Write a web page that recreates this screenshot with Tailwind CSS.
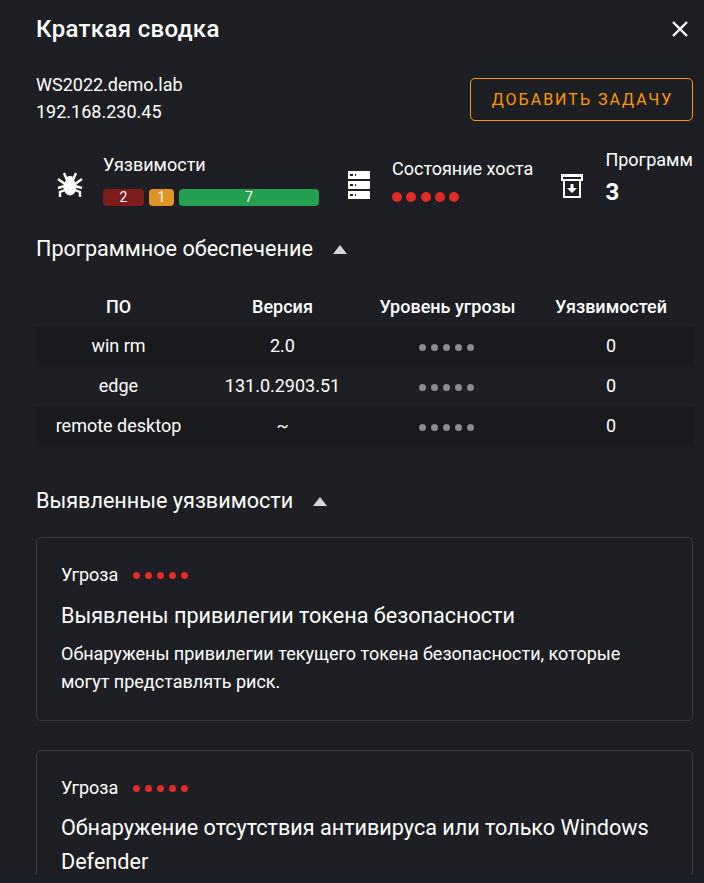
<!DOCTYPE html>
<html lang="ru">
<head>
  <meta charset="UTF-8">
  <meta name="viewport" content="width=device-width, initial-scale=1.0">
  <title>Краткая сводка</title>
  <script src="https://cdn.jsdelivr.net/npm/@tailwindcss/browser@4"></script>
</head>
<body class="h-[883px] overflow-hidden bg-[#1a2026] font-['Roboto',sans-serif] text-white">
  <div class="h-[875px] overflow-hidden bg-[#1e1f24] pl-[36px] pr-[11px]">
    <div class="flex h-[58px] items-center justify-between">
      <h1 class="text-[24px] font-medium tracking-[0.35px]">Краткая сводка</h1>
      <svg class="mr-[3px] h-5 w-5" viewBox="0 0 20 20" fill="none" stroke="white" stroke-width="2.4"><path d="M3 3l14 14M17 3L3 17"/></svg>
    </div>

    <div class="mt-[13px] flex items-start justify-between">
      <div class="text-[18px] leading-[27px]">
        <p>WS2022.demo.lab</p>
        <p>192.168.230.45</p>
      </div>
      <button class="mt-[7px] h-[43px] w-[223px] rounded-[5px] border border-[#ff9800] pl-[2px] text-[16px] font-normal tracking-[2px] text-[#ff9800]">ДОБАВИТЬ ЗАДАЧУ</button>
    </div>

    <div class="mt-[20px] flex h-[66px] items-center whitespace-nowrap">
      <div class="flex shrink-0 items-center">
        <svg class="ml-[21px] mt-[13px] h-[26px] w-[26px]" viewBox="0 0 26 26" fill="white">
          <ellipse cx="13" cy="15" rx="6.5" ry="8.5"/><circle cx="13" cy="8" r="4"/>
          <path d="M7 1l3 7M19 1l-3 7M1 7l7 5M25 7l-7 5M1 16l7-2M25 16l-7-2M3 25v-5l5-2M23 25v-5l-5-2" fill="none" stroke="white" stroke-width="2.4"/>
        </svg>
        <div class="ml-[20px] mt-[4px]">
          <p class="text-[18px] leading-5">Уязвимости</p>
          <div class="mt-[14px] flex gap-[5px] text-[14px] leading-[17px]">
            <span class="w-[41px] rounded-[4px] bg-[#7f1d1d] text-center">2</span>
            <span class="w-[25px] rounded-[4px] bg-[#e09326] text-center">1</span>
            <span class="w-[140px] rounded-[4px] bg-[#22a04f] text-center">7</span>
          </div>
        </div>
      </div>
      <div class="ml-[29px] flex shrink-0 items-center">
        <svg class="mt-[14px] h-[28px] w-[22px]" viewBox="0 0 22 28">
          <path fill="white" d="M0 0h22v8H0zM0 10h22v8H0zM0 20h22v8H0z"/>
          <path fill="#1e1f24" d="M2 3h3v2H2zM7 3h1v2H7zM2 13h3v2H2zM7 13h1v2H7zM2 23h3v2H2zM7 23h1v2H7z"/>
        </svg>
        <div class="ml-[22px] mt-[5px]">
          <p class="text-[18px] leading-5">Состояние хоста</p>
          <div class="mt-[13px] flex gap-[4.25px]">
            <span class="h-[10px] w-[10px] rounded-full bg-[#e02b27]"></span>
            <span class="h-[10px] w-[10px] rounded-full bg-[#e02b27]"></span>
            <span class="h-[10px] w-[10px] rounded-full bg-[#e02b27]"></span>
            <span class="h-[10px] w-[10px] rounded-full bg-[#e02b27]"></span>
            <span class="h-[10px] w-[10px] rounded-full bg-[#e02b27]"></span>
          </div>
        </div>
      </div>
      <div class="ml-[28px] flex shrink-0 items-center">
        <svg class="mt-[16px] h-[24px] w-[22px]" viewBox="0 0 22 24">
          <path fill="white" fill-rule="evenodd" d="M0 0h22v7h-2v17H2V7H0zM2 3v2h18V3zM4 7v15h14V7z"/>
          <path fill="white" d="M9.5 10h3v4h3.5l-5 5-5-5h3.5z"/>
        </svg>
        <div class="ml-[22px]">
          <p class="text-[18px] leading-5">Программ</p>
          <p class="mt-[8px] text-[24px] font-bold leading-7">3</p>
        </div>
      </div>
    </div>

    <div class="mt-[20px] flex h-[36px] items-center">
      <h2 class="text-[21.6px]">Программное обеспечение</h2>
      <span class="ml-[20px] h-0 w-0 border-x-[7px] border-b-[9px] border-x-transparent border-b-[#d6d6d6]"></span>
    </div>

    <div class="mt-[20px] text-center text-[18px]">
      <div class="grid h-[40px] grid-cols-[165px_163px_167px_160px] items-center pb-[2px] font-medium">
        <span>ПО</span><span>Версия</span><span>Уровень угрозы</span><span>Уязвимостей</span>
      </div>
      <div class="grid h-[40px] grid-cols-[165px_163px_167px_160px] items-center bg-[#191a1e] pb-[4px]">
        <span>win rm</span><span>2.0</span>
        <span class="mt-[4px] flex justify-center gap-[5px] pr-[2px]"><i class="h-[7px] w-[7px] rounded-full bg-[#8c8c8c]"></i><i class="h-[7px] w-[7px] rounded-full bg-[#8c8c8c]"></i><i class="h-[7px] w-[7px] rounded-full bg-[#8c8c8c]"></i><i class="h-[7px] w-[7px] rounded-full bg-[#8c8c8c]"></i><i class="h-[7px] w-[7px] rounded-full bg-[#8c8c8c]"></i></span>
        <span>0</span>
      </div>
      <div class="grid h-[40px] grid-cols-[165px_163px_167px_160px] items-center pb-[4px]">
        <span>edge</span><span>131.0.2903.51</span>
        <span class="mt-[4px] flex justify-center gap-[5px] pr-[2px]"><i class="h-[7px] w-[7px] rounded-full bg-[#8c8c8c]"></i><i class="h-[7px] w-[7px] rounded-full bg-[#8c8c8c]"></i><i class="h-[7px] w-[7px] rounded-full bg-[#8c8c8c]"></i><i class="h-[7px] w-[7px] rounded-full bg-[#8c8c8c]"></i><i class="h-[7px] w-[7px] rounded-full bg-[#8c8c8c]"></i></span>
        <span>0</span>
      </div>
      <div class="grid h-[40px] grid-cols-[165px_163px_167px_160px] items-center bg-[#191a1e] pb-[4px]">
        <span>remote desktop</span><span>~</span>
        <span class="mt-[4px] flex justify-center gap-[5px] pr-[2px]"><i class="h-[7px] w-[7px] rounded-full bg-[#8c8c8c]"></i><i class="h-[7px] w-[7px] rounded-full bg-[#8c8c8c]"></i><i class="h-[7px] w-[7px] rounded-full bg-[#8c8c8c]"></i><i class="h-[7px] w-[7px] rounded-full bg-[#8c8c8c]"></i><i class="h-[7px] w-[7px] rounded-full bg-[#8c8c8c]"></i></span>
        <span>0</span>
      </div>
    </div>

    <div class="mt-[36px] flex h-[36px] items-center">
      <h2 class="text-[21.6px]">Выявленные уязвимости</h2>
      <span class="ml-[20px] h-0 w-0 border-x-[7px] border-b-[9px] border-x-transparent border-b-[#d6d6d6]"></span>
    </div>

    <div class="mt-[18px] h-[184px] rounded-[5px] border border-[#3a3b40] px-[24px] pt-[27px]">
      <div class="flex items-center">
        <span class="text-[18px] leading-5">Угроза</span>
        <span class="ml-[15px] flex gap-[5px]">
          <i class="h-[7px] w-[7px] rounded-full bg-[#e02b27]"></i><i class="h-[7px] w-[7px] rounded-full bg-[#e02b27]"></i><i class="h-[7px] w-[7px] rounded-full bg-[#e02b27]"></i><i class="h-[7px] w-[7px] rounded-full bg-[#e02b27]"></i><i class="h-[7px] w-[7px] rounded-full bg-[#e02b27]"></i>
        </span>
      </div>
      <h3 class="mt-[17px] text-[21.6px] leading-7">Выявлены привилегии токена безопасности</h3>
      <p class="mt-[10px] text-[18px] leading-[28px]">Обнаружены привилегии текущего токена безопасности, которые могут представлять риск.</p>
    </div>

    <div class="mt-[29px] rounded-[5px] border border-[#3a3b40] px-[24px] pt-[27px] pb-[20px]">
      <div class="flex items-center">
        <span class="text-[18px] leading-5">Угроза</span>
        <span class="ml-[15px] flex gap-[5px]">
          <i class="h-[7px] w-[7px] rounded-full bg-[#e02b27]"></i><i class="h-[7px] w-[7px] rounded-full bg-[#e02b27]"></i><i class="h-[7px] w-[7px] rounded-full bg-[#e02b27]"></i><i class="h-[7px] w-[7px] rounded-full bg-[#e02b27]"></i><i class="h-[7px] w-[7px] rounded-full bg-[#e02b27]"></i>
        </span>
      </div>
      <h3 class="mt-[13px] text-[21.6px] leading-[34px]">Обнаружение отсутствия антивируса или только Windows Defender</h3>
    </div>
  </div>
</body>
</html>
